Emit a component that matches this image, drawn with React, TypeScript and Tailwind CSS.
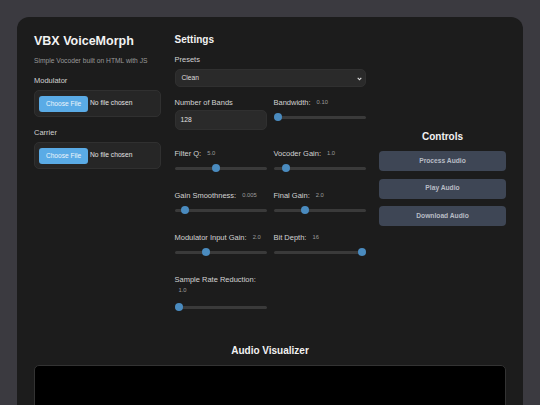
import React from "react";

const font = { fontFamily: '"Liberation Sans", Arial, Helvetica, sans-serif' };

function Slider({ pct }: { pct: number }) {
  return (
    <div className="relative mt-[6px] flex h-[8px] items-center">
      <div className="h-[3px] w-full rounded-full bg-[#3a3a3a]" />
      <div
        className="absolute top-0 h-[8px] w-[8px] rounded-full bg-[#4a8bbf]"
        style={{ left: `calc(${pct} * (100% - 8px))` }}
      />
    </div>
  );
}

function Label({ text, value }: { text: string; value?: string }) {
  return (
    <div className="flex h-[9px] items-center whitespace-nowrap text-[7.5px] leading-[9px] text-[#d2d2d2]">
      <span>{text}</span>
      {value !== undefined && (
        <span className="ml-[6px] text-[5.8px] text-[#9c9c9c]">{value}</span>
      )}
    </div>
  );
}

function SliderField({ text, value, pct }: { text: string; value: string; pct: number }) {
  return (
    <div className="flex flex-col">
      <Label text={text} value={value} />
      <Slider pct={pct} />
    </div>
  );
}

function FileBox() {
  return (
    <div className="mt-[5px] flex h-[27px] items-center rounded-[5px] border border-[#303030] bg-[#262626] px-[4px]">
      <div className="flex h-[16px] w-[49px] items-center justify-center rounded-[3px] bg-[#5aabe6] text-[6.6px] text-[#eef5fb]">
        Choose File
      </div>
      <span className="ml-[2px] text-[6.7px] text-[#e2e2e2]">No file chosen</span>
    </div>
  );
}

function CtrlButton({ text }: { text: string }) {
  return (
    <div className="flex h-[20px] items-center justify-center rounded-[4px] bg-[#3e4655] text-[6.7px] font-semibold text-[#b9bdc5]">
      {text}
    </div>
  );
}

export default function App() {
  return (
    <div className="min-h-[405px] w-full overflow-hidden bg-[#3b3a40] pt-[17px]" style={font}>
      <div className="mx-auto w-[506px] rounded-t-[12px] bg-[#1c1c1c] px-[17px] pt-[17px] pb-[40px]">
        <div className="grid grid-cols-[127px_191px_127px] gap-x-[13.5px] items-start">
          {/* Left column */}
          <div className="flex flex-col">
            <h1 className="text-[12.5px] font-bold leading-[14px] text-[#f2f2f2]">VBX VoiceMorph</h1>
            <p className="mt-[8px] text-[6.7px] leading-[9px] text-[#9a9a9a]">
              Simple Vocoder built on HTML with JS
            </p>
            <div className="mt-[11px] text-[7.5px] leading-[9px] text-[#d2d2d2]">Modulator</div>
            <FileBox />
            <div className="mt-[11px] text-[7.5px] leading-[9px] text-[#d2d2d2]">Carrier</div>
            <FileBox />
          </div>

          {/* Middle column */}
          <div className="flex flex-col">
            <h2 className="text-[10px] font-bold leading-[12px] text-[#f2f2f2]">Settings</h2>
            <div className="mt-[9px]">
              <Label text="Presets" />
            </div>
            <div className="relative mt-[5px] flex h-[18px] items-center rounded-[5px] border border-[#303030] bg-[#2a2a2a] pl-[6px] text-[6.7px] text-[#dedede]">
              Clean
              <svg
                className="absolute right-[3px] top-[7px]"
                width="5"
                height="4"
                viewBox="0 0 5 4"
              >
                <path d="M0.7 0.8 L2.5 2.8 L4.3 0.8" fill="none" stroke="#e0e0e0" strokeWidth="1.1" />
              </svg>
            </div>
            <div className="mt-[11px] grid grid-cols-[92px_92px] gap-x-[7px] gap-y-[19px]">
              <div className="flex flex-col">
                <Label text="Number of Bands" />
                <div className="mt-[3px] flex h-[20px] items-center rounded-[5px] border border-[#303030] bg-[#2a2a2a] pl-[5px] text-[6.7px] text-[#e2e2e2]">
                  128
                </div>
              </div>
              <SliderField text="Bandwidth:" value="0.10" pct={0} />
              <SliderField text="Filter Q:" value="5.0" pct={0.45} />
              <SliderField text="Vocoder Gain:" value="1.0" pct={0.1} />
              <SliderField text="Gain Smoothness:" value="0.005" pct={0.08} />
              <SliderField text="Final Gain:" value="2.0" pct={0.33} />
              <SliderField text="Modulator Input Gain:" value="2.0" pct={0.33} />
              <SliderField text="Bit Depth:" value="16" pct={1} />
              <div className="flex flex-col">
                <Label text="Sample Rate Reduction:" />
                <div className="ml-[4px] mt-[2px] text-[5.8px] leading-[9px] text-[#9c9c9c]">1.0</div>
                <div className="mt-[2px]">
                  <Slider pct={0} />
                </div>
              </div>
            </div>
          </div>

          {/* Right column */}
          <div className="mt-[97px] flex flex-col">
            <h2 className="text-center text-[10px] font-bold leading-[12px] text-[#f2f2f2]">Controls</h2>
            <div className="mt-[8px] flex flex-col gap-[7.5px]">
              <CtrlButton text="Process Audio" />
              <CtrlButton text="Play Audio" />
              <CtrlButton text="Download Audio" />
            </div>
          </div>
        </div>

        {/* Visualizer */}
        <div className="mt-[34px] flex flex-col">
          <h2 className="text-center text-[10px] font-bold leading-[12px] text-[#f2f2f2]">Audio Visualizer</h2>
          <div className="mt-[8px] h-[150px] rounded-[5px] border border-[#333] bg-black" />
        </div>
      </div>
    </div>
  );
}
